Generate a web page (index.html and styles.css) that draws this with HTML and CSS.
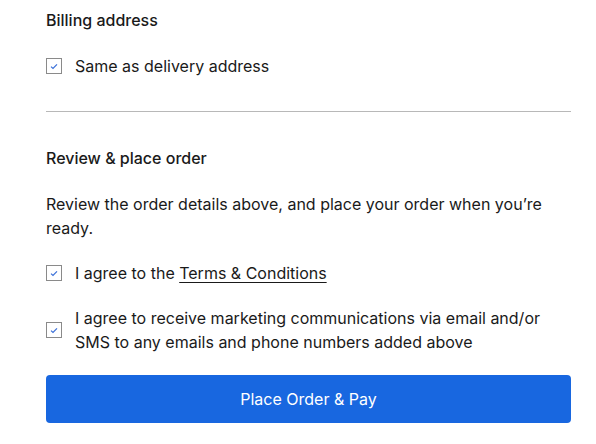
FILE: index.html
```html
<!DOCTYPE html>
<html>
<head>
<meta charset="utf-8">
<link rel="stylesheet" href="styles.css">
</head>
<body>
<div class="page">
  <section class="section billing">
    <h2 class="title">Billing address</h2>
    <label class="check-row">
      <span class="box"><svg viewBox="0 0 16 16" width="16" height="16"><path d="M5 8.6l2 1.9 4-4.2" fill="none" stroke="#3a6fd8" stroke-width="1.2"/></svg></span>
      <span class="label">Same as delivery address</span>
    </label>
  </section>
  <hr class="divider">
  <section class="section review">
    <h2 class="title">Review &amp; place order</h2>
    <p class="desc">Review the order details above, and place your order when you’re ready.</p>
    <label class="check-row">
      <span class="box"><svg viewBox="0 0 16 16" width="16" height="16"><path d="M5 8.6l2 1.9 4-4.2" fill="none" stroke="#3a6fd8" stroke-width="1.2"/></svg></span>
      <span class="label">I agree to the <a class="link" href="#">Terms &amp; Conditions</a></span>
    </label>
    <label class="check-row">
      <span class="box"><svg viewBox="0 0 16 16" width="16" height="16"><path d="M5 8.6l2 1.9 4-4.2" fill="none" stroke="#3a6fd8" stroke-width="1.2"/></svg></span>
      <span class="label">I agree to receive marketing communications via email and/or SMS to any emails and phone numbers added above</span>
    </label>
    <button class="pay">Place Order &amp; Pay</button>
  </section>
</div>
</body>
</html>
```
FILE: styles.css
```css
body {
  margin: 0;
  background: #fff;
  font-family: Inter, "Noto Sans", sans-serif;
  color: #1a1a1a;
}
.page {
  width: 525px;
  padding-left: 46px;
  padding-top: 8px;
}
.title {
  margin: 0;
  font-size: 16px;
  font-weight: 500;
  line-height: 24px;
}
.check-row {
  display: flex;
  align-items: center;
  gap: 13px;
  font-size: 16px;
  line-height: 24px;
}
.box {
  flex: none;
  width: 16px;
  height: 16px;
  box-sizing: border-box;
  border: 1px solid #8a8a8a;
  display: flex;
  align-items: center;
  justify-content: center;
}
.box svg { display: block; margin: -1px; }
.billing .check-row { margin-top: 22px; }
.divider {
  margin: 33px 0 0;
  border: 0;
  border-top: 1px solid #b8b8b8;
}
.review { padding-top: 34px; }
.desc {
  margin: 22px 0 0;
  font-size: 16px;
  line-height: 24px;
}
.review .check-row { margin-top: 21px; }
.review .check-row + .check-row { margin-top: 21px; }
.link { color: inherit; text-decoration: underline; text-underline-offset: 3px; }
.pay {
  display: block;
  width: 100%;
  height: 48px;
  margin-top: 21px;
  border: 0;
  border-radius: 4px;
  background: #1867e0;
  color: #fff;
  font-family: inherit;
  font-size: 16px;
}
```
